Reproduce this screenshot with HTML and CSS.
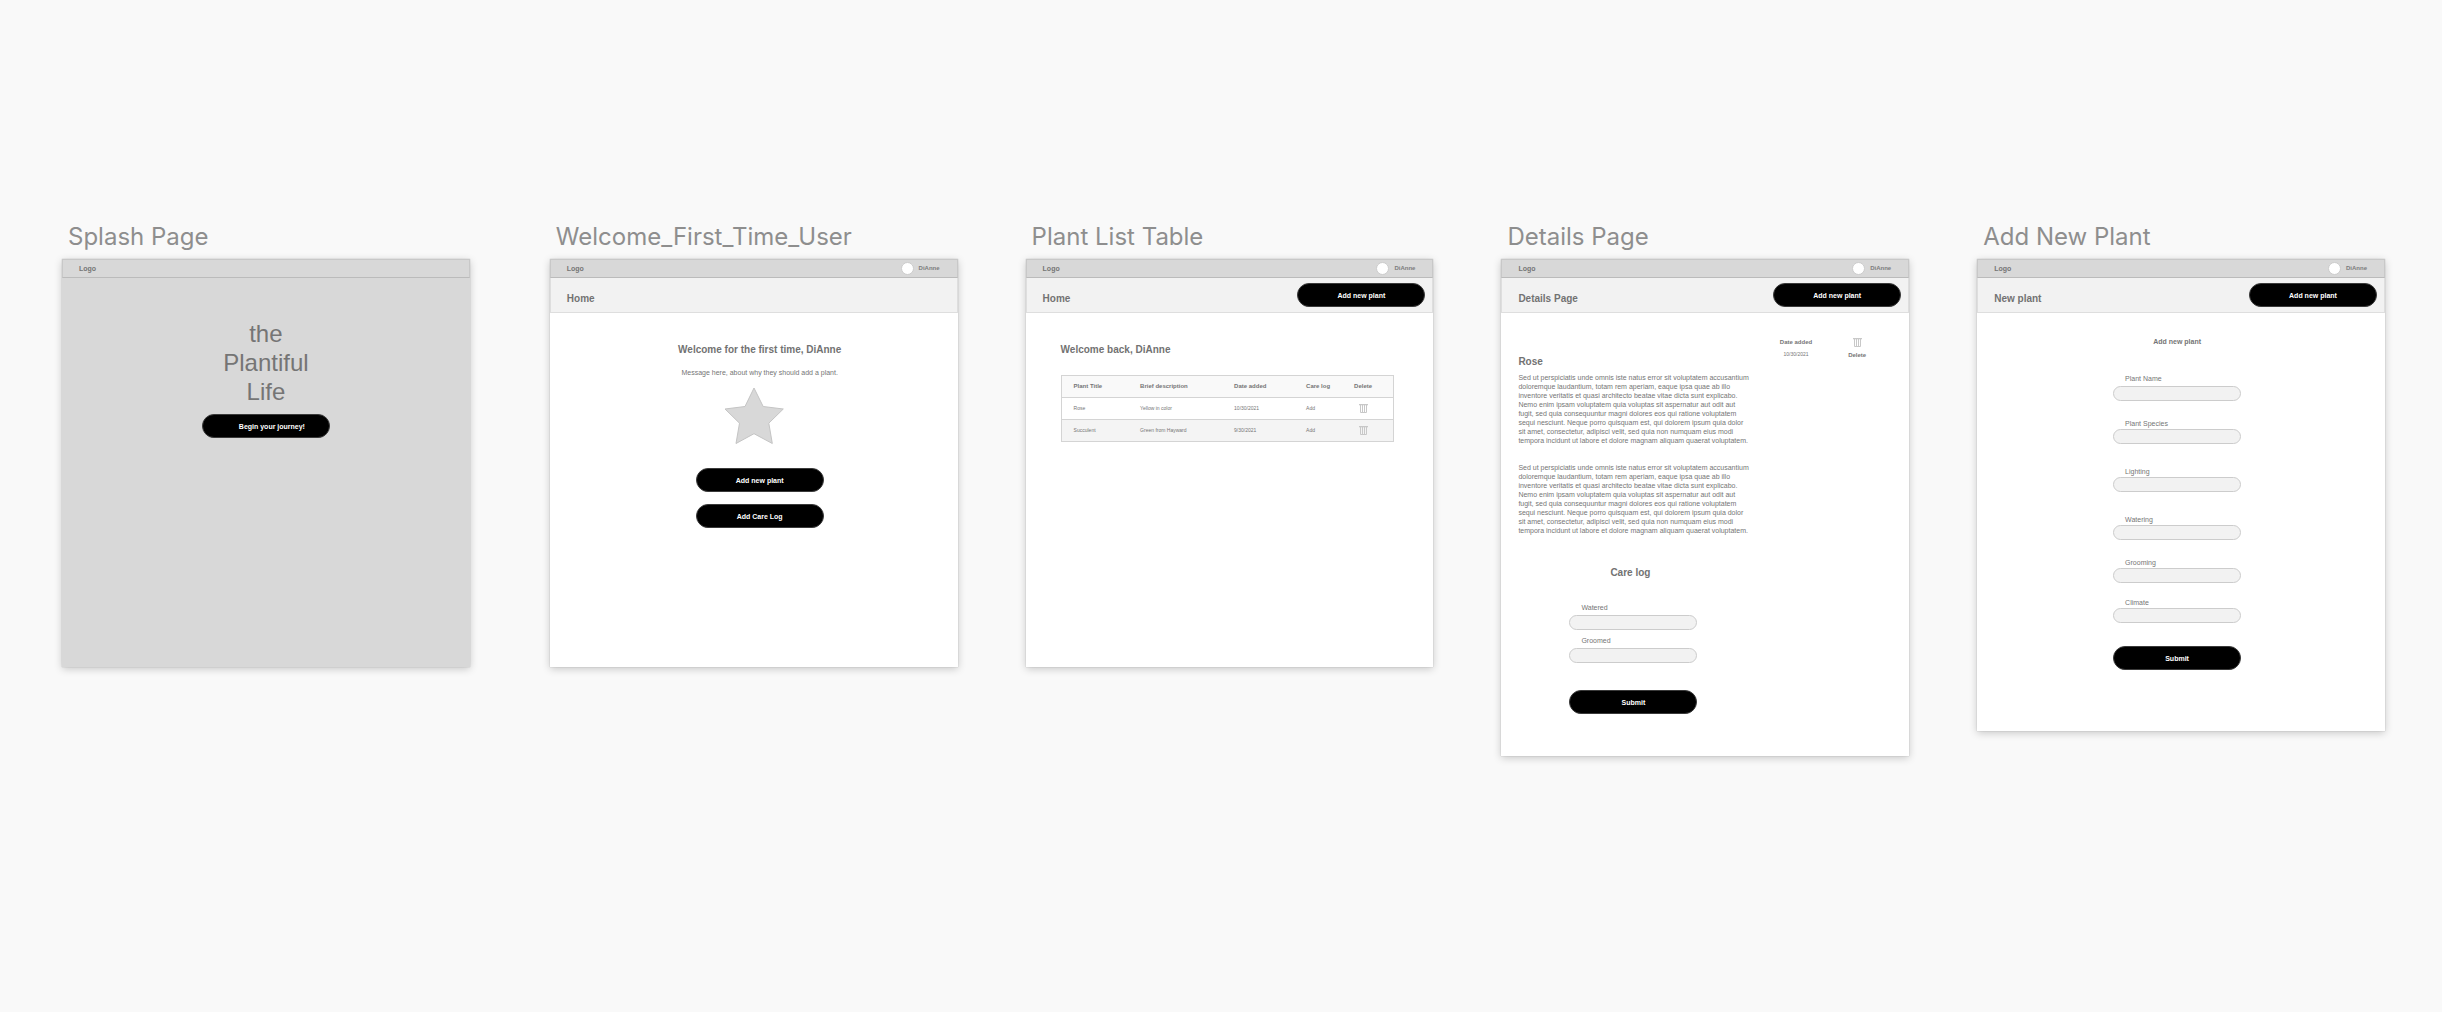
FILE: index.html
```html
<!DOCTYPE html>
<html lang="en">
<head>
<meta charset="utf-8">
<title>Plantiful Life wireframes</title>
<link rel="stylesheet" href="styles.css">
</head>
<body>
<svg class="sprite" aria-hidden="true">
  <symbol id="trash" viewBox="0 0 9 9">
    <path d="M0 0h9v1.300h-9z" fill="#c8c8c8"/>
    <path d="M1.500 1v7.500h6v-7.500M3.500 1v7.500M5.500 1v7.500" fill="none" stroke="#c8c8c8"/>
  </symbol>
</svg>
<main class="canvas">

  <section class="frame frame-splash">
    <h2 class="frame-title">Splash Page</h2>
    <div class="board board-splash">
      <header class="topbar"><span class="logo">Logo</span></header>
      <div class="splash">
        <h1 class="splash-name">the<br>Plantiful<br>Life</h1>
        <button class="pill pill-begin" type="button">Begin your journey!</button>
      </div>
    </div>
  </section>

  <section class="frame">
    <h2 class="frame-title">Welcome_First_Time_User</h2>
    <div class="board">
      <header class="topbar"><span class="logo">Logo</span><span class="user"><i class="avatar"></i>DiAnne</span></header>
      <div class="subbar"><h3 class="heading">Home</h3></div>
      <div class="welcome">
        <h3 class="heading">Welcome for the first time, DiAnne</h3>
        <p class="message">Message here, about why they should add a plant.</p>
        <div class="star-row">
          <svg class="star" viewBox="0 0 60 58" aria-hidden="true"><path d="M30 1 L39.200 19.500 L59.300 22 L44.800 36.200 L48.300 56.500 L30 46.700 L12 56.500 L15.500 36.200 L1 22 L21 19.500 Z" fill="#d8d8d8" stroke="#c4c4c4"/></svg>
        </div>
        <div class="actions">
          <button class="pill" type="button">Add new plant</button>
          <button class="pill" type="button">Add Care Log</button>
        </div>
      </div>
    </div>
  </section>

  <section class="frame">
    <h2 class="frame-title">Plant List Table</h2>
    <div class="board">
      <header class="topbar"><span class="logo">Logo</span><span class="user"><i class="avatar"></i>DiAnne</span></header>
      <div class="subbar"><h3 class="heading">Home</h3><button class="pill" type="button">Add new plant</button></div>
      <div class="list">
        <h3 class="heading">Welcome back, DiAnne</h3>
        <table class="plants">
          <colgroup><col class="c-title"><col class="c-desc"><col class="c-date"><col class="c-log"><col class="c-delete"></colgroup>
          <thead>
            <tr><th>Plant Title</th><th>Brief description</th><th>Date added</th><th>Care log</th><th>Delete</th></tr>
          </thead>
          <tbody>
            <tr><td>Rose</td><td>Yellow in color</td><td>10/30/2021</td><td>Add</td><td class="bin-cell"><button class="bin" type="button" aria-label="Delete Rose"><svg><use href="#trash"/></svg></button></td></tr>
            <tr><td>Succulent</td><td>Green from Hayward</td><td>9/30/2021</td><td>Add</td><td class="bin-cell"><button class="bin" type="button" aria-label="Delete Succulent"><svg><use href="#trash"/></svg></button></td></tr>
          </tbody>
        </table>
      </div>
    </div>
  </section>

  <section class="frame">
    <h2 class="frame-title">Details Page</h2>
    <div class="board">
      <header class="topbar"><span class="logo">Logo</span><span class="user"><i class="avatar"></i>DiAnne</span></header>
      <div class="subbar"><h3 class="heading">Details Page</h3><button class="pill" type="button">Add new plant</button></div>
      <div class="details">
        <article class="story">
          <h3 class="heading">Rose</h3>
          <p>Sed ut perspiciatis unde omnis iste natus error sit voluptatem accusantium<br>doloremque laudantium, totam rem aperiam, eaque ipsa quae ab illo<br>inventore veritatis et quasi architecto beatae vitae dicta sunt explicabo.<br>Nemo enim ipsam voluptatem quia voluptas sit aspernatur aut odit aut<br>fugit, sed quia consequuntur magni dolores eos qui ratione voluptatem<br>sequi nesciunt. Neque porro quisquam est, qui dolorem ipsum quia dolor<br>sit amet, consectetur, adipisci velit, sed quia non numquam eius modi<br>tempora incidunt ut labore et dolore magnam aliquam quaerat voluptatem.</p>
          <p>Sed ut perspiciatis unde omnis iste natus error sit voluptatem accusantium<br>doloremque laudantium, totam rem aperiam, eaque ipsa quae ab illo<br>inventore veritatis et quasi architecto beatae vitae dicta sunt explicabo.<br>Nemo enim ipsam voluptatem quia voluptas sit aspernatur aut odit aut<br>fugit, sed quia consequuntur magni dolores eos qui ratione voluptatem<br>sequi nesciunt. Neque porro quisquam est, qui dolorem ipsum quia dolor<br>sit amet, consectetur, adipisci velit, sed quia non numquam eius modi<br>tempora incidunt ut labore et dolore magnam aliquam quaerat voluptatem.</p>
        </article>
        <div class="added"><b>Date added</b><span>10/30/2021</span></div>
        <button class="remove" type="button"><svg><use href="#trash"/></svg>Delete</button>
      </div>
      <form class="care">
        <h3 class="heading">Care log</h3>
        <div class="field field-roomy"><label for="watered">Watered</label><input id="watered" type="text"></div>
        <div class="field field-roomy"><label for="groomed">Groomed</label><input id="groomed" type="text"></div>
        <button class="pill" type="button">Submit</button>
      </form>
    </div>
  </section>

  <section class="frame">
    <h2 class="frame-title">Add New Plant</h2>
    <div class="board">
      <header class="topbar"><span class="logo">Logo</span><span class="user"><i class="avatar"></i>DiAnne</span></header>
      <div class="subbar"><h3 class="heading">New plant</h3><button class="pill" type="button">Add new plant</button></div>
      <form class="add">
        <h3 class="add-title">Add new plant</h3>
        <div class="field field-roomy"><label for="name">Plant Name</label><input id="name" type="text"></div>
        <div class="field after-md"><label for="species">Plant Species</label><input id="species" type="text"></div>
        <div class="field after-lg"><label for="lighting">Lighting</label><input id="lighting" type="text"></div>
        <div class="field after-lg"><label for="watering">Watering</label><input id="watering" type="text"></div>
        <div class="field after-md"><label for="grooming">Grooming</label><input id="grooming" type="text"></div>
        <div class="field after-sm"><label for="climate">Climate</label><input id="climate" type="text"></div>
        <button class="pill" type="button">Submit</button>
      </form>
    </div>
  </section>

</main>
</body>
</html>
```
FILE: styles.css
```css
* { box-sizing: border-box; }

body {
  margin: 0;
  background: #f9f9f9;
  color: #757575;
  font: 7px/9px "Liberation Sans", Arial, sans-serif;
}

h1, h2, h3, p { margin: 0; }

button, input { font: inherit; color: inherit; }

.sprite { display: none; }

/* Canvas with the five artboards side by side */
.canvas {
  display: flex;
  align-items: flex-start;
  gap: 68px;
  padding: 222px 57px 100px 62px;
}

.frame { flex: 1 1 0; min-width: 0; }
.frame-splash { margin-right: 12px; }

.frame-title {
  margin: 0 0 8px 6px;
  color: #8e8e8e;
  font: 400 24px/29px Inter, sans-serif;
  white-space: nowrap;
}

.board {
  min-height: 408px;
  background: #fff;
  box-shadow: 0 0 1px rgba(0, 0, 0, 0.25), 0 2px 8px rgba(0, 0, 0, 0.2);
}
.board-splash { background: #d8d8d8; }

/* Bars */
.topbar {
  display: flex;
  align-items: center;
  justify-content: space-between;
  height: 19px;
  padding: 0 17px 0 16px;
  background: #d8d8d8;
  border: 1px solid #c8c8c8;
  border-bottom-color: #bbb;
  font-weight: bold;
}

.user {
  display: flex;
  align-items: center;
  gap: 5px;
  color: #7c7c7c;
  font-size: 6px;
}

.avatar {
  width: 13px;
  height: 13px;
  background: #fff;
  border: 1px solid #ccc;
  border-radius: 50%;
}

.subbar {
  display: flex;
  align-items: flex-start;
  justify-content: space-between;
  height: 35px;
  padding: 5px 7px 0 16px;
  background: #f2f2f2;
  border: 1px solid #dedede;
  border-top: 0;
}
.subbar .heading { padding-top: 10px; }

.heading {
  color: #727272;
  font-size: 10px;
  line-height: 12px;
}

.pill {
  display: block;
  width: 128px;
  height: 24px;
  padding: 0;
  background: #000;
  border: 1px solid #3a3a3a;
  border-radius: 12px;
  color: #fff;
  font-weight: bold;
}

/* Splash */
.splash {
  display: flex;
  flex-direction: column;
  align-items: center;
  gap: 8px;
  padding-top: 41px;
}
.splash-name {
  font-size: 24px;
  font-weight: 400;
  line-height: 29px;
  text-align: center;
}
.pill-begin { padding-left: 12px; }

/* First visit */
.welcome {
  padding: 31px 0 0 12px;
  text-align: center;
}
.message { margin-top: 12px; }
.star-row {
  margin-top: 10px;
  padding-right: 12px;
}
.star { display: block; width: 60px; height: 58px; margin: 0 auto; }
.actions {
  display: flex;
  flex-direction: column;
  align-items: center;
  gap: 12px;
  margin-top: 23px;
}

/* Plant list */
.list { padding: 31px 42px 0 35px; }

.plants {
  width: 100%;
  margin-top: 19px;
  table-layout: fixed;
  border-collapse: collapse;
  border: 1px solid #d4d4d4;
  text-align: left;
}
.plants tr { height: 22px; border-bottom: 1px solid #d4d4d4; }
.plants th { padding: 0; font-size: 6px; }
.plants td { padding: 0; font-size: 5px; }
.plants th:first-child, .plants td:first-child { padding-left: 12px; }
.plants thead tr { background: #f9f9f9; }
.plants tbody tr:nth-child(even) { background: #f4f4f4; }
.c-title { width: 79px; }
.c-desc { width: 94px; }
.c-date { width: 72px; }
.c-log { width: 48px; }
.c-delete { width: 39px; }
.plants .bin-cell { padding-left: 5px; }

.bin {
  display: block;
  padding: 0;
  background: none;
  border: 0;
}
.bin svg, .remove svg { display: block; width: 9px; height: 9px; }

/* Details */
.details {
  display: flex;
  align-items: flex-start;
  padding: 25px 43px 0 17px;
}
.story { flex: 1; padding-top: 18px; white-space: nowrap; }
.story p { margin-top: 5px; }
.story p + p { margin-top: 18px; }

.added {
  display: flex;
  flex-direction: column;
  align-items: center;
  gap: 3px;
  font-size: 6px;
}
.added span { font-size: 5px; }

.remove {
  display: flex;
  flex-direction: column;
  align-items: center;
  gap: 4px;
  margin-left: 36px;
  padding: 0;
  background: none;
  border: 0;
  font-size: 6px;
  font-weight: bold;
}

/* Forms */
.field {
  display: flex;
  flex-direction: column;
  gap: 1px;
  width: 128px;
}
.field-roomy { gap: 3px; }
.field label { padding-left: 12px; }
.field input {
  width: 100%;
  height: 15px;
  padding: 0 8px;
  background: #f2f2f2;
  border: 1px solid #ccc;
  border-radius: 8px;
}

.care { padding: 32px 0 42px 68px; }
.care .heading { margin-bottom: 24px; padding-left: 41px; }
.care .field + .field { margin-top: 6px; }
.care .pill { margin-top: 27px; }

.add {
  display: flex;
  flex-direction: column;
  align-items: center;
  padding: 24px 8px 61px 0;
}
.add-title { margin-bottom: 28px; font-size: 7px; line-height: 9px; }
.add .after-sm { margin-top: 15px; }
.add .after-md { margin-top: 18px; }
.add .after-lg { margin-top: 23px; }
.add .pill { margin-top: 23px; }
```
